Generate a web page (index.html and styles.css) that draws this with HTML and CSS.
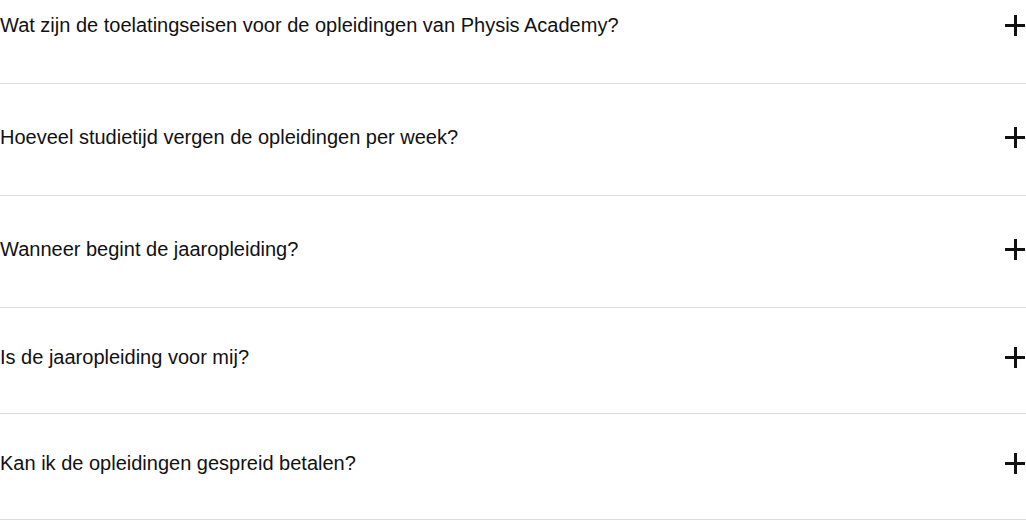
FILE: index.html
```html
<!DOCTYPE html>
<html lang="nl">
<head>
<meta charset="utf-8">
<title>Veelgestelde vragen</title>
<link rel="stylesheet" href="styles.css">
</head>
<body>
<div class="faq">
  <div class="faq-item faq-item--first">
    <span class="faq-question">Wat zijn de toelatingseisen voor de opleidingen van Physis Academy?</span>
    <span class="faq-plus" aria-hidden="true"></span>
  </div>
  <div class="faq-item">
    <span class="faq-question">Hoeveel studietijd vergen de opleidingen per week?</span>
    <span class="faq-plus" aria-hidden="true"></span>
  </div>
  <div class="faq-item">
    <span class="faq-question">Wanneer begint de jaaropleiding?</span>
    <span class="faq-plus" aria-hidden="true"></span>
  </div>
  <div class="faq-item faq-item--compact">
    <span class="faq-question">Is de jaaropleiding voor mij?</span>
    <span class="faq-plus" aria-hidden="true"></span>
  </div>
  <div class="faq-item faq-item--compact">
    <span class="faq-question">Kan ik de opleidingen gespreid betalen?</span>
    <span class="faq-plus" aria-hidden="true"></span>
  </div>
</div>
</body>
</html>
```

FILE: styles.css
```css
html, body {
  margin: 0;
  padding: 0;
  background: #fff;
}

body {
  font-family: "Liberation Sans", Arial, Helvetica, sans-serif;
  color: #111;
}

.faq {
  display: flex;
  flex-direction: column;
}

.faq-item {
  display: flex;
  align-items: center;
  justify-content: space-between;
  padding: 41px 1px 46px 0;
  border-bottom: 1px solid #dcdcdc;
}

.faq-item--first {
  padding-top: 13px;
}

.faq-item--compact {
  padding-top: 37px;
  padding-bottom: 44px;
}

.faq-question {
  font-size: 20px;
  line-height: 24px;
  color: #111;
}

.faq-plus {
  position: relative;
  width: 20px;
  height: 21px;
  flex: none;
}

.faq-plus::before,
.faq-plus::after {
  content: "";
  position: absolute;
  background: #111;
}

.faq-plus::before {
  left: 0;
  right: 0;
  top: 9px;
  height: 3px;
}

.faq-plus::after {
  top: 0;
  bottom: 0;
  left: 8.5px;
  width: 3px;
}
```
